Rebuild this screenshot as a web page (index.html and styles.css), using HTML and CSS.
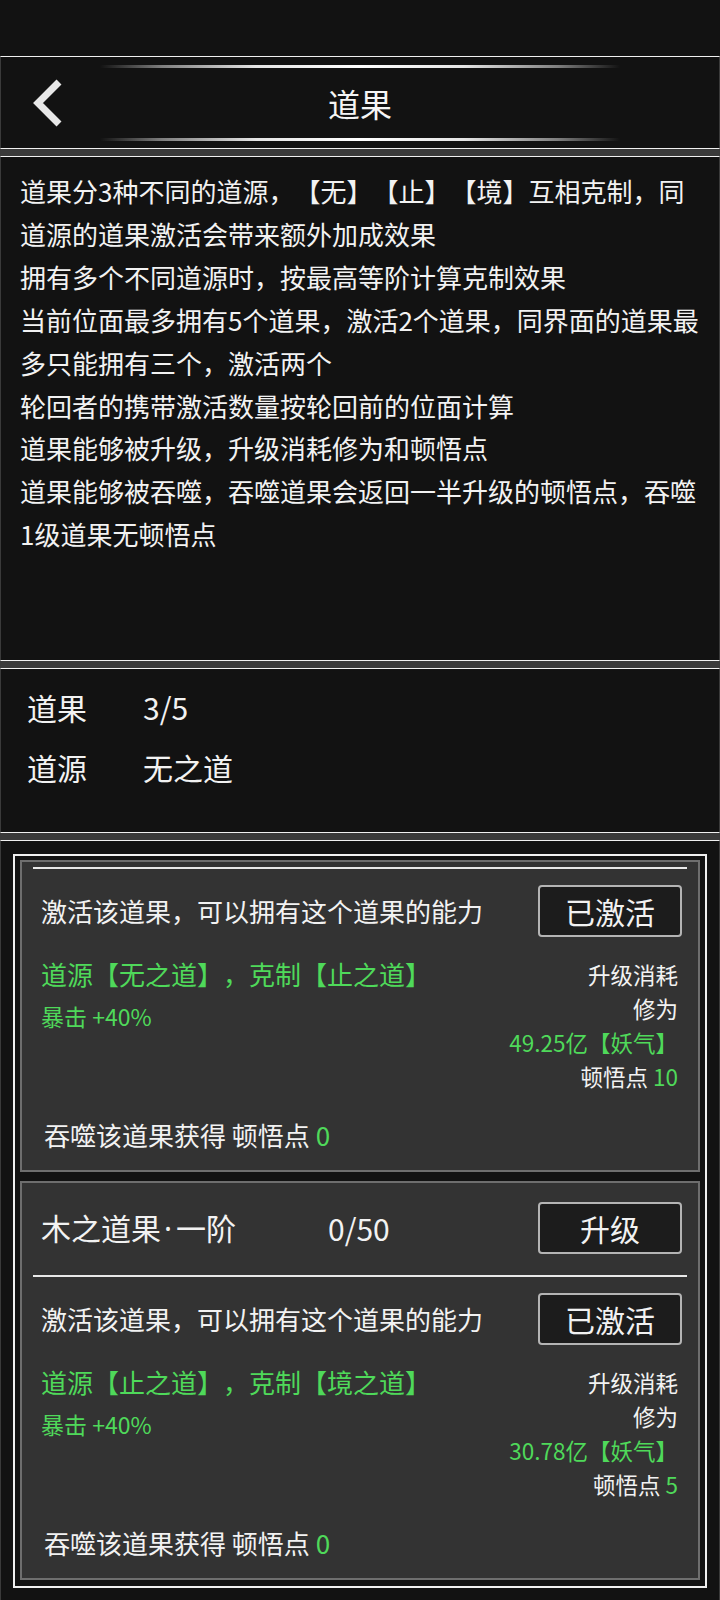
FILE: index.html
```html
<!DOCTYPE html>
<html lang="zh-CN">
<head>
<meta charset="utf-8">
<title>道果</title>
<link rel="stylesheet" href="styles.css">
</head>
<body>
<div class="status"></div>
<header class="panel header">
  <div class="glow"></div>
  <div class="header-row">
    <span class="back"><svg width="32" height="50" viewBox="0 0 32 50"><polyline points="27,4 6,25 27,46" fill="none" stroke="#e8e8e8" stroke-width="7" stroke-linejoin="miter"/></svg></span>
    <h1 class="title">道果</h1>
    <span></span>
  </div>
  <div class="glow"></div>
</header>
<section class="panel rules">
  <p>道果分3种不同的道源，【无】【止】【境】互相克制，同道源的道果激活会带来额外加成效果</p>
  <p>拥有多个不同道源时，按最高等阶计算克制效果</p>
  <p>当前位面最多拥有5个道果，激活2个道果，同界面的道果最多只能拥有三个，激活两个</p>
  <p>轮回者的携带激活数量按轮回前的位面计算</p>
  <p>道果能够被升级，升级消耗修为和顿悟点</p>
  <p>道果能够被吞噬，吞噬道果会返回一半升级的顿悟点，吞噬1级道果无顿悟点</p>
</section>
<section class="panel summary">
  <div class="stat"><span class="stat-label">道果</span><span>3/5</span></div>
  <div class="stat"><span class="stat-label">道源</span><span>无之道</span></div>
</section>
<section class="panel list">
  <div class="frame">
    <div class="card">
      <div class="sep first"></div>
      <div class="row-top"><span class="desc">激活该道果，可以拥有这个道果的能力</span><button class="btn">已激活</button></div>
      <div class="row-mid">
        <div class="effects">
          <div class="green origin">道源【无之道】，克制【止之道】</div>
          <div class="green crit">暴击 +40%</div>
        </div>
        <div class="cost">
          <div>升级消耗</div>
          <div>修为</div>
          <div class="green">49.25亿【妖气】</div>
          <div>顿悟点 <span class="green">10</span></div>
        </div>
      </div>
      <div class="devour">吞噬该道果获得 顿悟点 <span class="green">0</span></div>
    </div>
    <div class="card">
      <div class="card-head"><span class="card-title">木之道果<span class="dot">·</span>一阶</span><span class="card-progress">0/50</span><button class="btn">升级</button></div>
      <div class="sep"></div>
      <div class="row-top"><span class="desc">激活该道果，可以拥有这个道果的能力</span><button class="btn">已激活</button></div>
      <div class="row-mid">
        <div class="effects">
          <div class="green origin">道源【止之道】，克制【境之道】</div>
          <div class="green crit">暴击 +40%</div>
        </div>
        <div class="cost">
          <div>升级消耗</div>
          <div>修为</div>
          <div class="green">30.78亿【妖气】</div>
          <div>顿悟点 <span class="green">5</span></div>
        </div>
      </div>
      <div class="devour">吞噬该道果获得 顿悟点 <span class="green">0</span></div>
    </div>
  </div>
</section>
</body>
</html>
```

FILE: styles.css
```css
* { box-sizing: content-box; }
html, body { margin: 0; padding: 0; }
body {
  background: #3a3a3a;
  font-family: "Noto Sans CJK SC", "Noto Sans", sans-serif;
  color: #f2f2f2;
  text-spacing-trim: space-all;
  width: 720px;
}
.status { height: 56px; background: #121212; }
.panel {
  background: #121212;
  border-top: 1px solid #f0f0f0;
  border-bottom: 1px solid #f0f0f0;
  border-left: 1px solid #3a3a3a;
  border-right: 1px solid #3a3a3a;
  margin-bottom: 7px;
}
.header { padding: 8px 0 7px; }
.glow {
  width: 520px;
  height: 3px;
  margin: 0 auto;
  background: linear-gradient(90deg, rgba(255,255,255,0) 0%, rgba(200,200,200,0.6) 12%, rgba(240,240,240,0.95) 30%, #ffffff 50%, rgba(240,240,240,0.95) 70%, rgba(200,200,200,0.6) 88%, rgba(255,255,255,0) 100%);
}
.header-row {
  height: 70px;
  display: grid;
  grid-template-columns: 1fr auto 1fr;
  align-items: center;
}
.back { display: flex; padding-left: 31px; }
.title { margin: 0; font-size: 32px; font-weight: 400; line-height: 70px; color: #f5f5f5; }
.rules { height: 490px; padding: 13px 17px 0 19px; }
.rules p { margin: 0; font-size: 26px; line-height: 42.9px; }
.summary { height: 155px; padding: 8px 0 0 26px; }
.stat { display: flex; font-size: 30px; line-height: 60px; }
.stat-label { width: 116px; }
.list { padding: 13px 12px 12px; margin-bottom: 0; }
.frame { border: 2px solid #f0f0f0; padding: 4px 5px 6px; }
.card {
  background: #333333;
  border: 2px solid #6e6e6e;
  padding: 0 11px 18px;
}
.card + .card { margin-top: 9px; }
.sep { height: 2px; background: #e8e8e8; margin-top: 20px; }
.sep.first { margin-top: 5px; }
.card-head { display: flex; align-items: center; margin-top: 18px; padding-left: 8px; }
.card-title { width: 287px; font-size: 30px; line-height: 52px; }
.dot { font-family: "Noto Sans", sans-serif; padding: 0 4px 0 3px; }
.card-progress { flex: 1; font-size: 30px; line-height: 52px; }
.btn {
  width: 144px;
  height: 52px;
  box-sizing: border-box;
  padding: 0;
  margin: 0 5px 0 0;
  background: #1c1c1c;
  border: 2px solid #b4b4b4;
  border-radius: 4px;
  color: #f2f2f2;
  font-family: "Noto Sans CJK SC", sans-serif;
  font-size: 30px;
  line-height: 46px;
}
.row-top { display: flex; align-items: center; justify-content: space-between; margin-top: 16px; padding-left: 8px; }
.desc { font-size: 26px; line-height: 34px; }
.row-mid { display: flex; justify-content: space-between; align-items: flex-start; margin-top: 20px; }
.effects { padding-left: 8px; }
.origin { font-size: 26px; line-height: 34px; }
.crit { font-size: 23px; line-height: 34px; margin-top: 8px; }
.cost { font-size: 22.5px; line-height: 34px; text-align: right; padding-right: 9px; }
.devour { font-size: 26px; line-height: 34px; margin-top: 25px; padding-left: 11px; }
.green { color: #4fd95a; }
```
